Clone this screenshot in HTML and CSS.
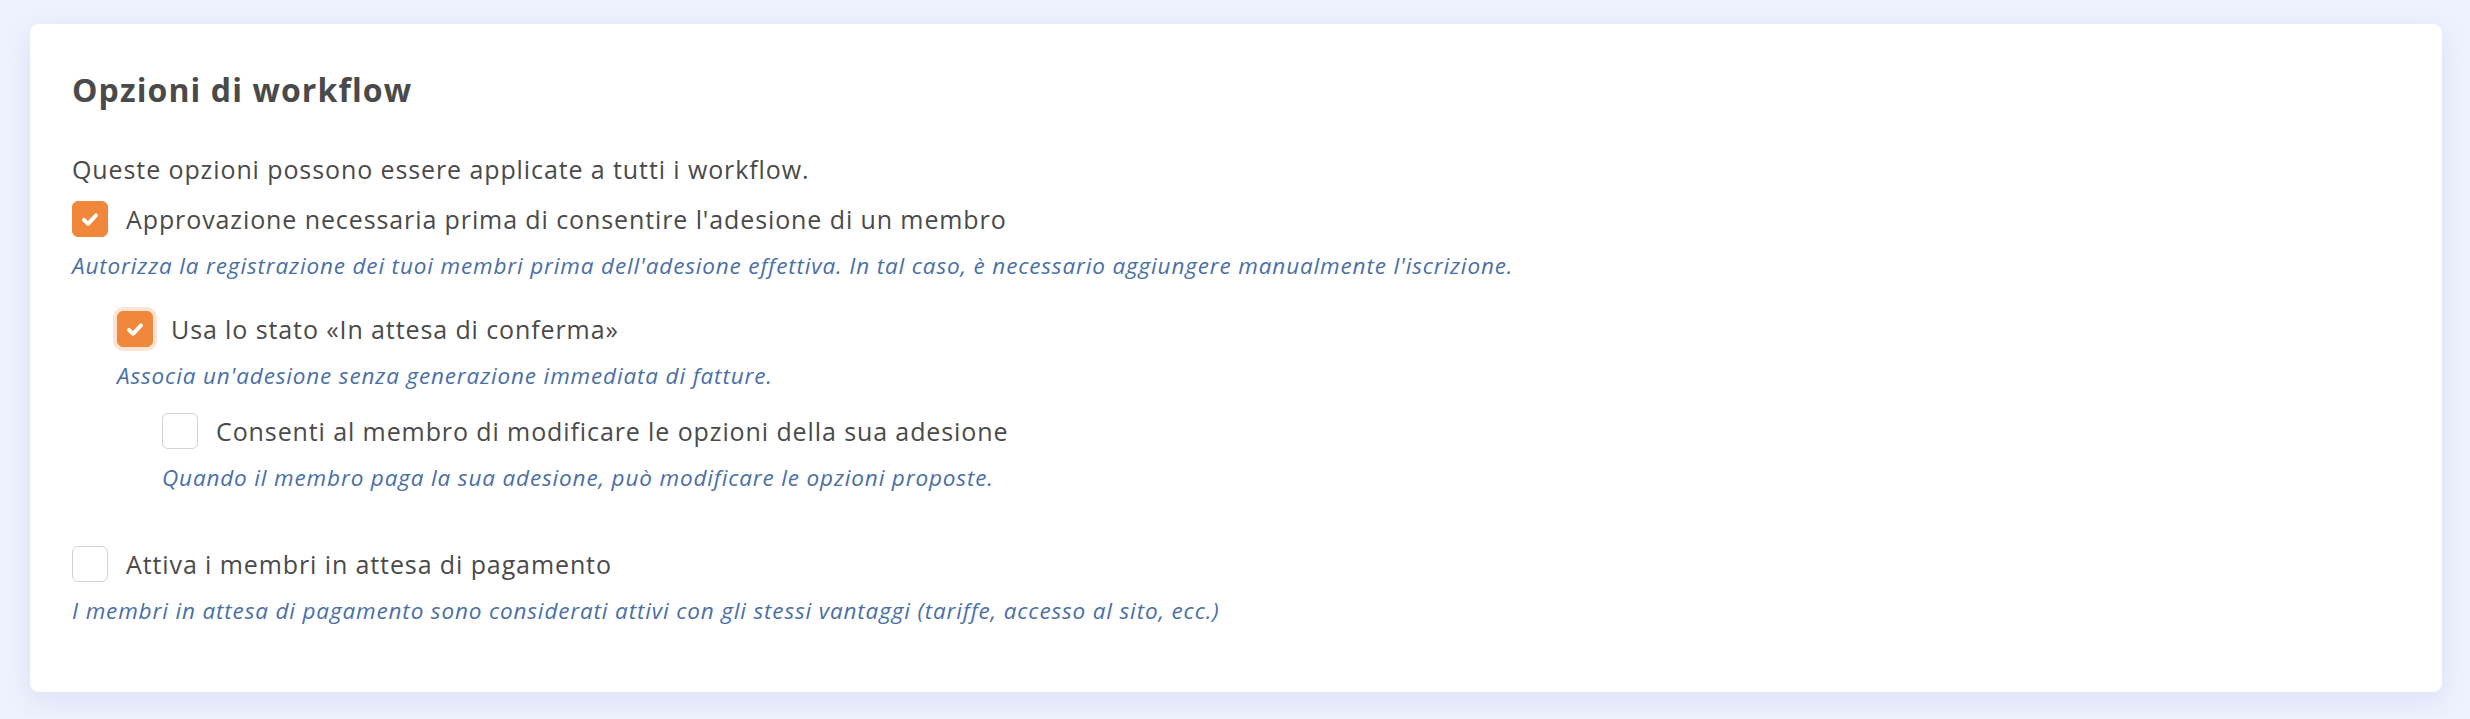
FILE: index.html
```html
<!DOCTYPE html>
<html lang="it">
<head>
  <meta charset="UTF-8">
  <title>Opzioni di workflow</title>
  <link rel="stylesheet" href="styles.css">
</head>
<body>
  <div class="card">
    <h2>Opzioni di workflow</h2>
    <p class="intro">Queste opzioni possono essere applicate a tutti i workflow.</p>

    <div class="option">
      <label class="option-row">
        <span class="check checked">
          <svg viewBox="0 0 16 16"><path d="M4 8.6l2.7 2.6 5.3-5.6"/></svg>
        </span>
        Approvazione necessaria prima di consentire l'adesione di un membro
      </label>
      <p class="help">Autorizza la registrazione dei tuoi membri prima dell'adesione effettiva. In tal caso, è necessario aggiungere manualmente l'iscrizione.</p>

      <div class="option sub">
        <label class="option-row">
          <span class="check checked focus">
            <svg viewBox="0 0 16 16"><path d="M4 8.6l2.7 2.6 5.3-5.6"/></svg>
          </span>
          Usa lo stato «In attesa di conferma»
        </label>
        <p class="help">Associa un'adesione senza generazione immediata di fatture.</p>

        <div class="option sub sub-2">
          <label class="option-row">
            <span class="check"></span>
            Consenti al membro di modificare le opzioni della sua adesione
          </label>
          <p class="help">Quando il membro paga la sua adesione, può modificare le opzioni proposte.</p>
        </div>
      </div>
    </div>

    <div class="option last">
      <label class="option-row">
        <span class="check"></span>
        Attiva i membri in attesa di pagamento
      </label>
      <p class="help">I membri in attesa di pagamento sono considerati attivi con gli stessi vantaggi (tariffe, accesso al sito, ecc.)</p>
    </div>
  </div>
</body>
</html>
```

FILE: styles.css
```css
body {
  margin: 0;
  padding: 24px 28px 25px 30px;
  background: #eef2fc;
  font-family: "Open Sans", Arial, sans-serif;
  color: #4a4a4a;
}
.card {
  background: #fff;
  border-radius: 9px;
  box-shadow: 0 8px 30px rgba(80, 110, 220, 0.12);
  padding: 46px 42px 66px 42px;
}
h2 {
  margin: 0;
  font-size: 32px;
  line-height: 40px;
  font-weight: 700;
  letter-spacing: 1.1px;
  color: #4a4a4a;
}
.intro {
  margin: 41px 0 14px;
  font-size: 25px;
  line-height: 36px;
  letter-spacing: 0.9px;
}
.option-row {
  display: flex;
  align-items: center;
  gap: 18px;
  height: 36px;
  font-size: 25px;
  letter-spacing: 0.9px;
  cursor: pointer;
}
.check {
  flex: none;
  width: 36px;
  height: 36px;
  box-sizing: border-box;
  border: 1.5px solid #cfd2d8;
  border-radius: 6px;
  background: #fff;
  display: flex;
  align-items: center;
  justify-content: center;
}
.check.checked {
  background: #f0873a;
  border-color: #f0873a;
}
.check.focus {
  box-shadow: 0 0 0 4px rgba(240, 135, 58, 0.22);
}
.check svg {
  width: 24px;
  height: 24px;
  fill: none;
  stroke: #fff;
  stroke-width: 2.6;
  stroke-linecap: round;
  stroke-linejoin: round;
}
.help {
  margin: 14px 0 0;
  font-size: 22.5px;
  line-height: 30px;
  letter-spacing: 0.85px;
  font-style: italic;
  color: #4a6fa5;
}
.sub {
  margin-left: 45px;
  margin-top: 30px;
}
.sub-2 {
  margin-top: 22px;
}
.last {
  margin-top: 53px;
}
```
